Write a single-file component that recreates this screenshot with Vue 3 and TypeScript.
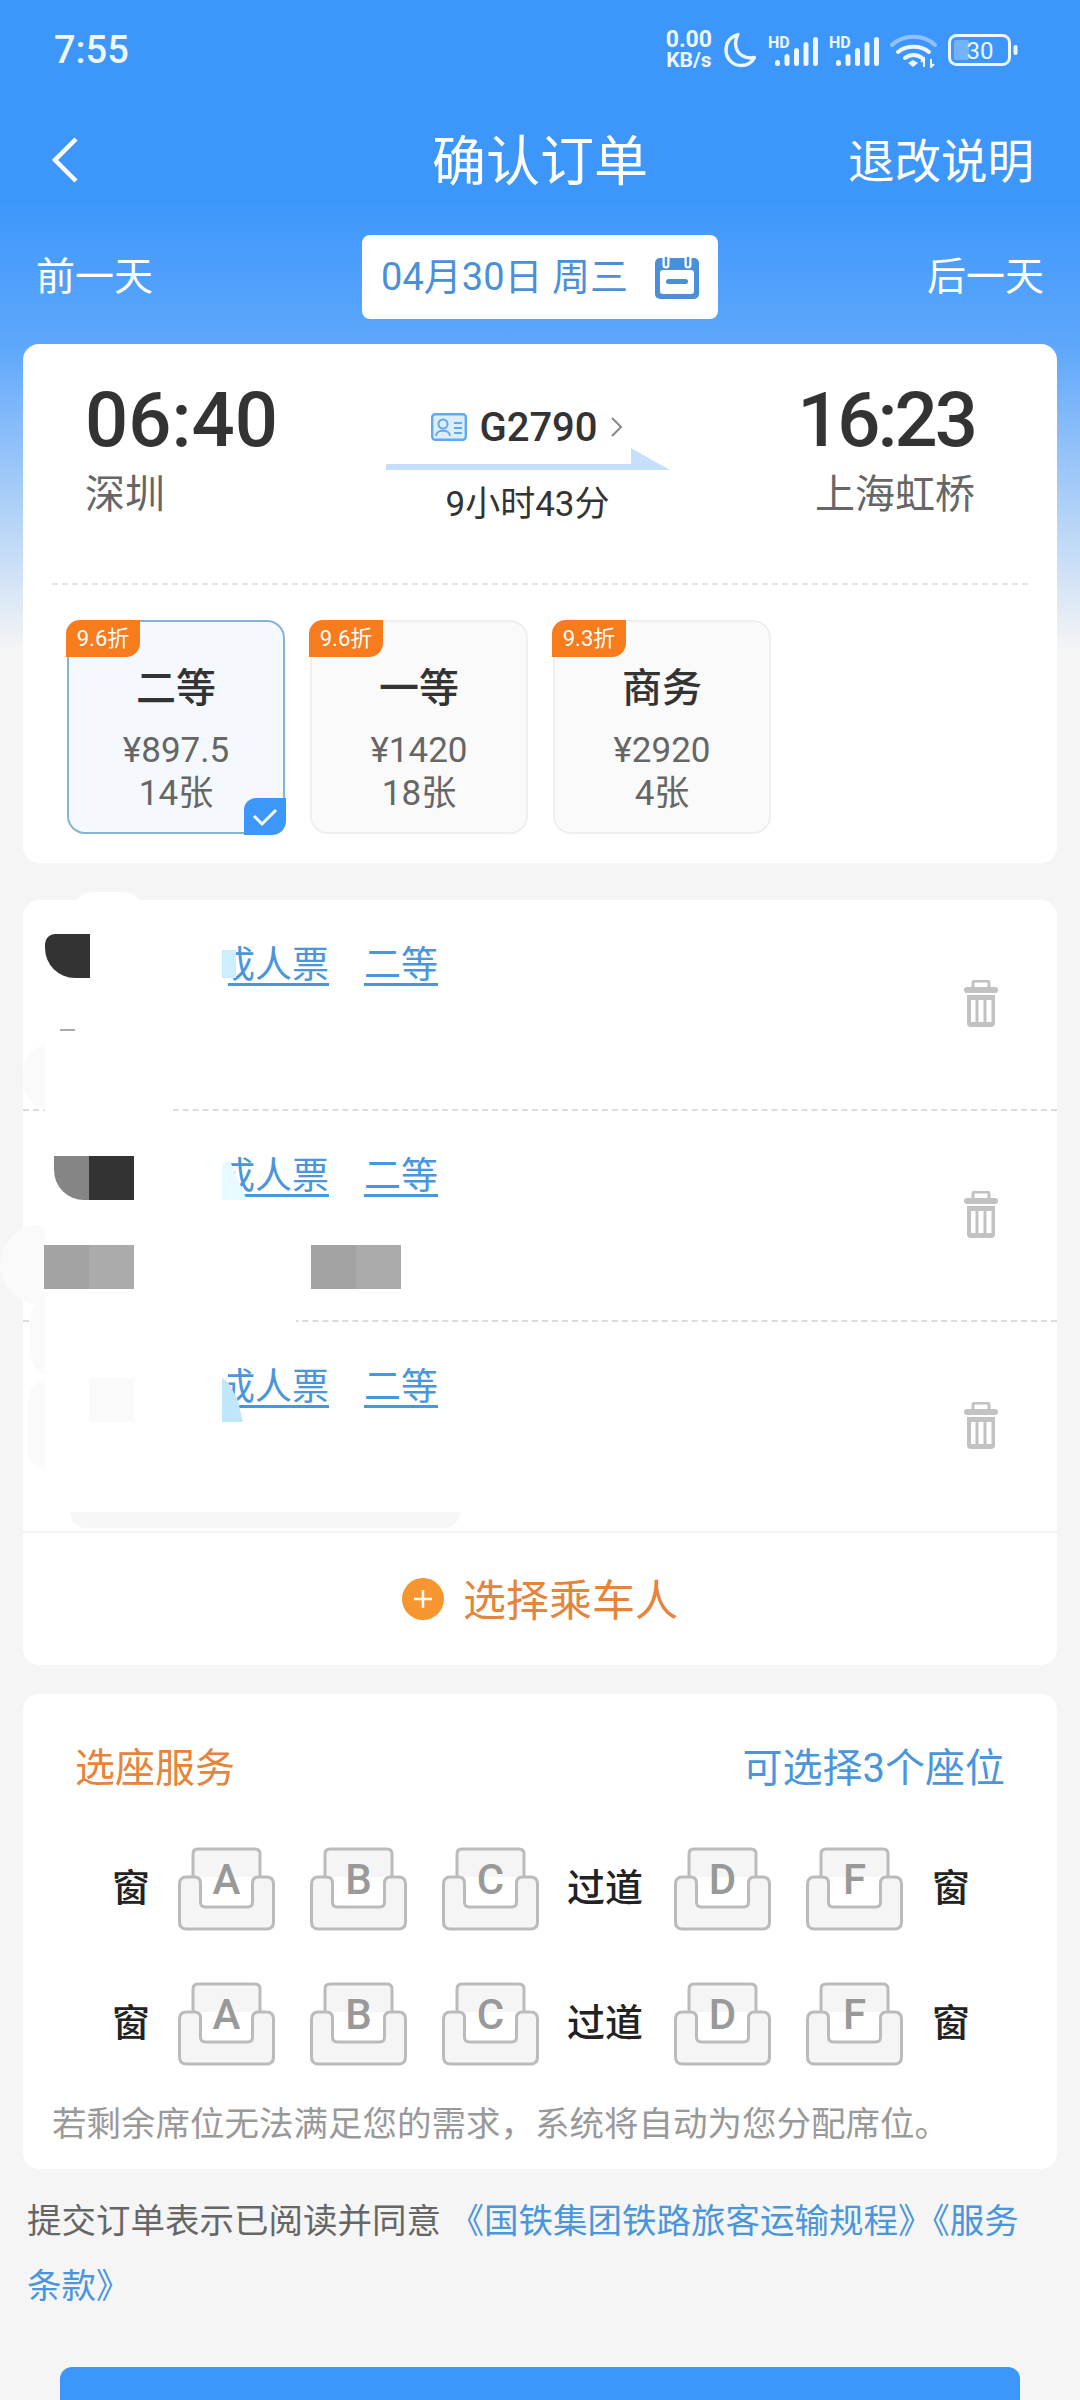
<script setup lang="ts">
interface Ticket {
  discount: string
  name: string
  price: string
  left: string
  active?: boolean
}

const tickets: Ticket[] = [
  { discount: '9.6折', name: '二等', price: '¥897.5', left: '14张', active: true },
  { discount: '9.6折', name: '一等', price: '¥1420', left: '18张' },
  { discount: '9.3折', name: '商务', price: '¥2920', left: '4张' },
]

const passengers = [1, 2, 3]
const seatRows = [1, 2]
const leftSeats = ['A', 'B', 'C']
const rightSeats = ['D', 'F']
const signals = [1, 2]
const bars = [
  { x: 7, h: 6 },
  { x: 16.5, h: 12 },
  { x: 26, h: 18 },
  { x: 35.5, h: 24 },
  { x: 45, h: 29 },
]
</script>

<template>
  <div class="page">
    <div class="status">
      <span class="clock">7:55</span>
      <div class="status-icons">
        <div class="speed"><span>0.00</span><span>KB/s</span></div>
        <svg width="34" height="36" viewBox="0 0 34 36">
          <path d="M15 2.500C7 5 3 11 3 18c0 9 7 15.500 15 15.500 6 0 11-3 13.500-8-9 2-17-3-18.500-10.500C12 10 13 6 15 2.500z" fill="none" stroke="#eef6ff" stroke-width="3.400" stroke-linejoin="round" />
        </svg>
        <svg v-for="s in signals" :key="s" width="50" height="32" viewBox="0 0 50 32">
          <text x="0" y="14" font-size="16" font-weight="700" fill="#eef6ff" font-family="Roboto, sans-serif">HD</text>
          <rect v-for="b in bars" :key="b.x" :x="b.x" :y="32 - b.h" width="5" :height="b.h" rx="2.500" fill="#eef6ff" />
        </svg>
        <svg width="47" height="36" viewBox="0 0 47 36">
          <path d="M2 13C13 2 34 2 45 13" fill="none" stroke="#8fc2fb" stroke-width="4" stroke-linecap="round" />
          <path d="M8 20c8-7 23-7 31 0" fill="none" stroke="#eef6ff" stroke-width="4" stroke-linecap="round" />
          <path d="M15 26c5-4 12-4 17 0" fill="none" stroke="#eef6ff" stroke-width="4" stroke-linecap="round" />
          <path d="M18 31l5-3 5 3-5 4z" fill="#eef6ff" />
          <path d="M34 35V27l-3 3M41 27v8l3-3" fill="none" stroke="#eef6ff" stroke-width="2" />
        </svg>
        <svg width="70" height="32" viewBox="0 0 70 32">
          <rect x="1.500" y="1.500" width="60" height="29" rx="7" fill="none" stroke="#eef6ff" stroke-width="3" />
          <rect x="6" y="6" width="15" height="20" rx="2" fill="#74b2fc" />
          <text x="32" y="24.500" text-anchor="middle" font-size="24" fill="#eef6ff" font-family="Roboto, sans-serif">30</text>
          <rect x="65.500" y="11" width="4" height="10" rx="2" fill="#eef6ff" />
        </svg>
      </div>
    </div>

    <div class="nav">
      <svg width="30" height="46" viewBox="0 0 30 46">
        <path d="M26 2L5 23l21 21" fill="none" stroke="#fff" stroke-width="4.500" />
      </svg>
      <span class="title">确认订单</span>
      <span class="nav-right">退改说明</span>
    </div>

    <div class="date-bar">
      <span class="day-link">前一天</span>
      <div class="date-box">
        <span>04月30日 周三</span>
        <svg width="44" height="44" viewBox="0 0 44 44">
          <rect x="0" y="3" width="44" height="41" rx="5" fill="#4a90d9" />
          <rect x="5" y="15" width="34" height="24" rx="3" fill="#fff" />
          <rect x="11" y="24" width="22" height="5" rx="2.500" fill="#4a90d9" />
          <path d="M11 3v7M33 3v7" stroke="#fff" stroke-width="7" stroke-linecap="round" />
          <path d="M11 3v7M33 3v7" stroke="#4a90d9" stroke-width="2.500" stroke-linecap="round" />
        </svg>
      </div>
      <span class="day-link">后一天</span>
    </div>

    <section class="card train-card">
      <div class="train-row">
        <div class="station">
          <div class="time">06:40</div>
          <div class="city">深圳</div>
        </div>
        <div class="train-mid">
          <div class="train-no">
            <svg width="36" height="28" viewBox="0 0 36 28">
              <rect x="1.200" y="1.200" width="33.600" height="25.600" rx="3" fill="#dcedfd" stroke="#62a9ec" stroke-width="2.400" />
              <circle cx="12" cy="11" r="4.500" fill="none" stroke="#62a9ec" stroke-width="2" />
              <path d="M5 23c0-7 14-7 14 0" fill="none" stroke="#62a9ec" stroke-width="2" />
              <path d="M23 10h8M23 15h8M23 20h8" stroke="#62a9ec" stroke-width="2" />
            </svg>
            <span class="no-text">G2790</span>
            <svg width="14" height="24" viewBox="0 0 14 24">
              <path d="M2 3l9 9-9 9" fill="none" stroke="#888" stroke-width="2" />
            </svg>
          </div>
          <svg class="arrow" width="284" height="22" viewBox="0 0 284 22">
            <path d="M0 16h245V0l39 22H0z" fill="#c6e0fb" />
          </svg>
          <div class="duration">9小时43分</div>
        </div>
        <div class="station station-end">
          <div class="time time-end">16:23</div>
          <div class="city">上海虹桥</div>
        </div>
      </div>
      <div class="dash"></div>
      <div class="tickets">
        <div v-for="t in tickets" :key="t.name" class="ticket" :class="{ active: t.active }">
          <span class="badge">{{ t.discount }}</span>
          <div class="t-name">{{ t.name }}</div>
          <div class="t-price">{{ t.price }}</div>
          <div class="t-left">{{ t.left }}</div>
          <span v-if="t.active" class="tick">
            <svg width="26" height="20" viewBox="0 0 26 20">
              <path d="M2 9l8 8L24 3" fill="none" stroke="#fff" stroke-width="3" />
            </svg>
          </span>
        </div>
      </div>
    </section>

    <section class="card people-card">
      <div v-for="p in passengers" :key="p" class="person">
        <div class="links">
          <span>成人票</span>
          <span>二等</span>
        </div>
        <svg class="trash" width="34" height="48" viewBox="0 0 34 48">
          <path d="M9 8V3q0-2 2-2h12q2 0 2 2v5" fill="none" stroke="#c2c2c2" stroke-width="3" />
          <rect x="0" y="7" width="34" height="6" rx="3" fill="#c2c2c2" />
          <path d="M3 15h28v28q0 4-4 4H7q-4 0-4-4z" fill="#c2c2c2" />
          <rect x="7" y="20" width="4.500" height="22" fill="#fff" />
          <rect x="14.500" y="20" width="5" height="22" fill="#fff" />
          <rect x="22.500" y="20" width="5" height="22" fill="#fff" />
        </svg>
      </div>
      <!-- 打码的色块和涂白，盖在乘车人信息上面 -->
      <i class="smear smear-top"></i>
      <i class="smear smear-1"></i>
      <i class="smear smear-2"></i>
      <i class="smear smear-3"></i>
      <i class="smear smear-4"></i>
      <i class="mask mask-a"></i>
      <i class="mask mask-a2"></i>
      <i class="mask mask-b"></i>
      <i class="mask mask-b2"></i>
      <i class="mask mask-c"></i>
      <i class="sliver sliver-1"></i>
      <i class="sliver sliver-2"></i>
      <i class="sliver sliver-3"></i>
      <i class="px dark p1"></i>
      <i class="px mid p2"></i>
      <i class="px dark p3"></i>
      <i class="px g1 p4"></i>
      <i class="px g2 p5"></i>
      <i class="px g1 p6"></i>
      <i class="px g2 p7"></i>
      <i class="px pale p8"></i>
      <i class="stub"></i>
      <i class="smear band"></i>
      <div class="add-row">
        <svg width="42" height="42" viewBox="0 0 42 42">
          <circle cx="21" cy="21" r="21" fill="#f7962f" />
          <path d="M21 12v18M12 21h18" stroke="#fff" stroke-width="2.500" />
        </svg>
        <span>选择乘车人</span>
      </div>
    </section>

    <section class="card seat-card">
      <div class="seat-head">
        <span class="seat-title">选座服务</span>
        <span class="seat-count">可选择3个座位</span>
      </div>
      <div v-for="r in seatRows" :key="r" class="seat-row">
        <span class="seat-label">窗</span>
        <svg v-for="s in leftSeats" :key="s" class="seat" width="97" height="84" viewBox="0 0 97 84">
          <path d="M15 30V7q0-5 5-5h57q5 0 5 5v23" fill="#f5f5f5" stroke="#bbb" stroke-width="3" />
          <path d="M1.500 37q0-7 7-7h8q6 0 6 6v19q0 5 5 5h42q5 0 5-5V36q0-6 6-6h8q7 0 7 7v38q0 7-7 7h-80q-7 0-7-7z" fill="#f5f5f5" stroke="#bbb" stroke-width="3" />
          <text x="48.500" y="47" text-anchor="middle" font-size="42" font-weight="500" fill="#999" font-family="Roboto, sans-serif">{{ s }}</text>
        </svg>
        <span class="aisle">过道</span>
        <svg v-for="s in rightSeats" :key="s" class="seat" width="97" height="84" viewBox="0 0 97 84">
          <path d="M15 30V7q0-5 5-5h57q5 0 5 5v23" fill="#f5f5f5" stroke="#bbb" stroke-width="3" />
          <path d="M1.500 37q0-7 7-7h8q6 0 6 6v19q0 5 5 5h42q5 0 5-5V36q0-6 6-6h8q7 0 7 7v38q0 7-7 7h-80q-7 0-7-7z" fill="#f5f5f5" stroke="#bbb" stroke-width="3" />
          <text x="48.500" y="47" text-anchor="middle" font-size="42" font-weight="500" fill="#999" font-family="Roboto, sans-serif">{{ s }}</text>
        </svg>
        <span class="seat-label seat-label-end">窗</span>
      </div>
      <p class="seat-tip">若剩余席位无法满足您的需求，系统将自动为您分配席位。</p>
    </section>

    <p class="agree">提交订单表示已阅读并同意 <a>《国铁集团铁路旅客运输规程》《服务</a><br><a>条款》</a></p>

    <div class="submit"></div>
  </div>
</template>

<style>
html,
body {
  margin: 0;
  background: #f5f5f5;
}
</style>

<style scoped>
.page {
  width: 1080px;
  height: 2400px;
  overflow: hidden;
  font-family: Roboto, "Noto Sans CJK SC", sans-serif;
  background: linear-gradient(#3d97fb 0, #3d97fb 200px, #5ea7fb 345px, #f5f5f5 650px);
}

.status {
  height: 100px;
  padding: 0 62px 0 54px;
  display: flex;
  align-items: center;
  justify-content: space-between;
  color: #eef6ff;
  box-sizing: border-box;
}

.clock {
  font-size: 38px;
  font-weight: 500;
}

.status-icons {
  display: flex;
  align-items: center;
  gap: 11px;
}

.speed {
  display: flex;
  flex-direction: column;
  align-items: center;
  font-size: 21px;
  line-height: 20px;
  font-weight: 700;
}

.speed span:first-child {
  font-size: 23px;
}

.nav {
  height: 120px;
  padding: 0 46px 0 50px;
  display: flex;
  align-items: center;
  justify-content: space-between;
  color: #fff;
  position: relative;
}

.title {
  position: absolute;
  left: 0;
  right: 0;
  margin-top: -6px;
  text-align: center;
  font-size: 54px;
}

.nav-right {
  margin-top: -6px;
  font-size: 46.500px;
}

.date-bar {
  height: 84px;
  margin-top: 15px;
  padding: 0 36px;
  display: flex;
  align-items: center;
  justify-content: space-between;
}

.day-link {
  margin-bottom: 8px;
  font-size: 39px;
  color: #fff;
}

.date-box {
  width: 356px;
  height: 84px;
  border-radius: 8px;
  background: #fff;
  display: flex;
  align-items: center;
  justify-content: center;
  gap: 27px;
  font-size: 38px;
  color: #4a90d9;
}

.date-box span {
  margin-bottom: 8px;
}

.card {
  margin: 0 23px;
  background: #fff;
  border-radius: 16px;
}

.train-card {
  margin-top: 25px;
  height: 519px;
  padding: 0 29px;
  box-sizing: border-box;
}

.train-row {
  height: 239px;
  padding: 33px 53px 0 33px;
  display: flex;
  justify-content: space-between;
  box-sizing: border-box;
}

.station {
  display: flex;
  flex-direction: column;
}

.station-end {
  align-items: flex-end;
}

.time {
  font-size: 76px;
  line-height: 86px;
  font-weight: 500;
  color: #333;
}

.time-end {
  letter-spacing: -3px;
}

.city {
  margin-top: 3px;
  font-size: 40px;
  line-height: 58px;
  color: #666;
}

.train-mid {
  display: flex;
  flex-direction: column;
  align-items: center;
  margin-right: 20px;
  padding-top: 27px;
}

.train-no {
  display: flex;
  align-items: center;
  gap: 12px;
  height: 46px;
}

.no-text {
  font-size: 40px;
  font-weight: 500;
  color: #333;
}

.arrow {
  display: block;
  margin-top: -2px;
}

.duration {
  font-size: 35px;
  line-height: 50px;
  margin-top: 10px;
  color: #333;
}

.dash {
  border-top: 2px dashed #e4e4e4;
}

.tickets {
  display: flex;
  gap: 25px;
  padding: 35px 15px 0;
}

.ticket {
  position: relative;
  width: 218px;
  height: 214px;
  box-sizing: border-box;
  border: 2px solid #efefef;
  border-radius: 18px;
  background: #fafafa;
  text-align: center;
  padding-top: 39px;
}

.ticket.active {
  border-color: #84b5d6;
  background: #f5f9fe;
}

.badge {
  position: absolute;
  left: -3px;
  top: -2px;
  width: 74px;
  height: 37px;
  border-radius: 14px 0 14px 0;
  background: #f67c1e;
  color: #fff;
  font-size: 22px;
  line-height: 37px;
}

.t-name {
  font-size: 40px;
  line-height: 56px;
  font-weight: 500;
  color: #333;
}

.t-price,
.t-left {
  font-size: 35px;
  line-height: 43px;
  color: #666;
}

.t-price {
  margin-top: 12px;
}

.tick {
  position: absolute;
  right: -3px;
  bottom: -3px;
  width: 42px;
  height: 37px;
  background: #3d97fb;
  border-radius: 12px 0 14px 0;
  display: flex;
  align-items: center;
  justify-content: center;
}

.people-card {
  margin-top: 37px;
  height: 765px;
  position: relative;
}

.person {
  height: 211px;
  box-sizing: border-box;
  border-bottom: 2px dashed #dcdcdc;
  padding: 43px 59px 0 195px;
  display: flex;
  justify-content: space-between;
}

.person:nth-child(3) {
  border-bottom: 2px solid #f3f3f3;
}

.links {
  display: flex;
  gap: 35px;
  font-size: 37px;
  line-height: 46px;
  height: 46px;
  color: #4a96dc;
  text-decoration: underline;
  text-decoration-thickness: 3px;
  text-underline-offset: 5px;
}

.trash {
  margin-top: 37px;
}

.mask,
.smear,
.sliver,
.px,
.stub {
  position: absolute;
}

.mask {
  left: 22px;
  background: #fff;
}

.mask-a {
  top: 0;
  width: 183px;
  height: 205px;
}

.mask-a2 {
  top: 205px;
  width: 128px;
  height: 12px;
}

.mask-b {
  top: 217px;
  width: 183px;
  height: 200px;
}

.mask-b2 {
  top: 415px;
  width: 251px;
  height: 12px;
}

.mask-c {
  top: 427px;
  width: 183px;
  height: 185px;
}

.smear {
  background: #fafafa;
}

.smear-top {
  left: 50px;
  top: -8px;
  width: 70px;
  height: 40px;
  border-radius: 35px;
  background: #fff;
}

.smear-1 {
  left: -23px;
  top: 325px;
  width: 80px;
  height: 80px;
  border-radius: 40px;
}

.smear-2 {
  left: 0;
  top: 143px;
  width: 40px;
  height: 68px;
  border-radius: 30px 0 0 30px;
}

.smear-3 {
  left: 7px;
  top: 400px;
  width: 30px;
  height: 75px;
  border-radius: 20px 0 0 20px;
}

.smear-4 {
  left: 5px;
  top: 480px;
  width: 30px;
  height: 90px;
  border-radius: 20px 0 0 20px;
}

.band {
  left: 47px;
  top: 612px;
  width: 390px;
  height: 16px;
  background: #f7f7f7;
  border-radius: 0 0 30px 30px;
}

.sliver {
  left: 199px;
}

.sliver-1 {
  top: 50px;
  width: 14px;
  height: 28px;
  background: #cdeeff;
}

.sliver-2 {
  top: 260px;
  width: 25px;
  height: 40px;
  background: #e8f9ff;
  clip-path: polygon(0 10%, 30% 0, 100% 100%, 0 100%);
}

.sliver-3 {
  top: 478px;
  width: 21px;
  height: 44px;
  background: #c0e6fb;
  clip-path: polygon(0 0, 30% 10%, 75% 50%, 100% 100%, 0 100%);
}

.px {
  width: 45px;
  height: 44px;
}

.dark {
  background: #333;
}

.mid {
  background: #858585;
}

.g1 {
  background: #a3a3a3;
}

.g2 {
  background: #ababab;
}

.pale {
  background: #fafafa;
}

.p1 {
  left: 22px;
  top: 34px;
  border-radius: 10px 0 0 30px;
}

.p2 {
  left: 31px;
  top: 256px;
  width: 35px;
  border-radius: 0 0 0 30px;
}

.p3 {
  left: 66px;
  top: 256px;
}

.p4 {
  left: 21px;
  top: 345px;
}

.p5 {
  left: 66px;
  top: 345px;
}

.p6 {
  left: 288px;
  top: 345px;
}

.p7 {
  left: 333px;
  top: 345px;
}

.p8 {
  left: 66px;
  top: 478px;
}

.stub {
  left: 37px;
  top: 129px;
  width: 15px;
  height: 2px;
  background: #aaa;
}

.add-row {
  height: 132px;
  display: flex;
  align-items: center;
  justify-content: center;
  gap: 19px;
  font-size: 43px;
  color: #e5843a;
}

.add-row span {
  margin-bottom: 4px;
}

.seat-card {
  margin-top: 29px;
  height: 475px;
  box-sizing: border-box;
  padding-top: 48px;
}

.seat-head {
  display: flex;
  justify-content: space-between;
  padding: 0 52px;
  font-size: 40px;
  line-height: 54px;
}

.seat-title {
  color: #e5843a;
}

.seat-count {
  color: #4a96dc;
}

.seat-row {
  display: flex;
  align-items: center;
  height: 135px;
  padding-left: 89px;
  font-size: 38px;
  font-weight: 500;
  color: #222;
}

.seat-row:nth-child(2) {
  margin-top: 25px;
}

.seat-label {
  width: 36px;
  margin-bottom: 8px;
}

.seat-label-end {
  margin-left: 29px;
}

.seat {
  margin-left: 30px;
  flex: none;
}

.seat + .seat {
  margin-left: 35px;
}

.aisle {
  margin-left: 28px;
  margin-bottom: 8px;
  width: 77px;
}

.seat-tip {
  margin: 11px 0 0;
  padding-left: 29px;
  font-size: 34.500px;
  line-height: 44px;
  color: #999;
}

.agree {
  margin: 20px 0 0;
  padding: 0 27px;
  font-size: 34.500px;
  line-height: 65px;
  color: #666;
}

.agree a {
  color: #4a96dc;
}

.submit {
  margin: 48px 60px 0;
  height: 100px;
  border-radius: 12px;
  background: #3d97fb;
}
</style>
